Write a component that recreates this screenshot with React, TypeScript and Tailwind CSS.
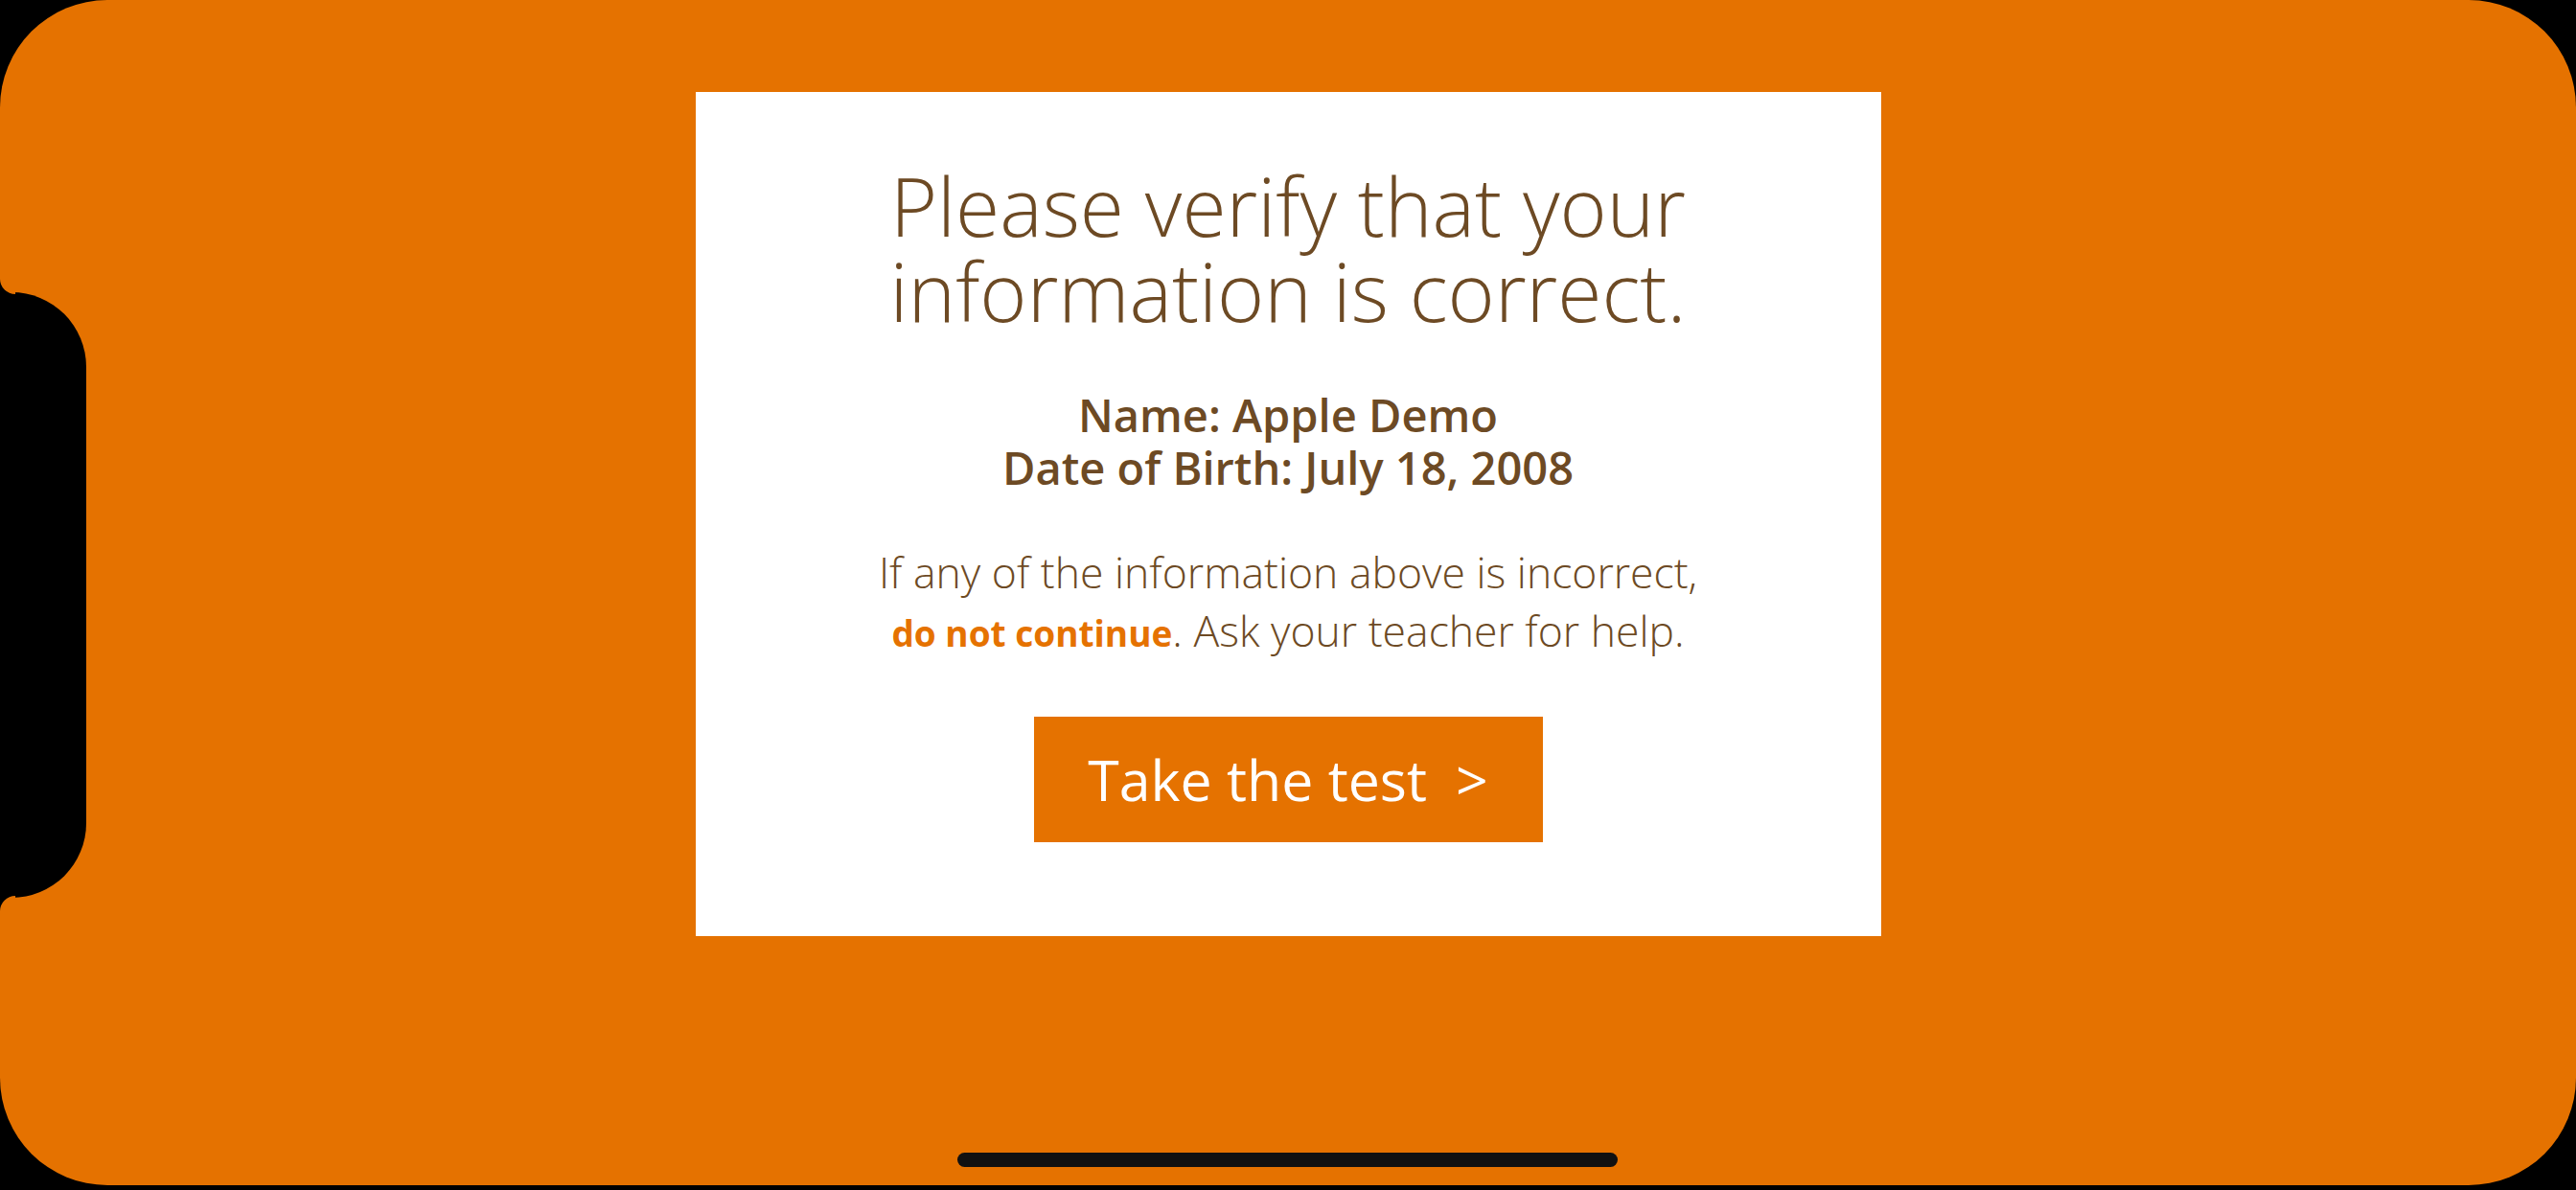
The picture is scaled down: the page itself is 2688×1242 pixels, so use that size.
import React from "react";

const App: React.FC = () => {
  return (
    <div className="w-[2688px] h-[1242px] bg-black overflow-hidden font-['Open_Sans',sans-serif]">
      <div className="relative w-full h-[1237px] bg-[#e57200] rounded-[112px] flex justify-center">
        {/* Notch cut-out with small fillets */}
        <div className="absolute left-0 top-[305px] w-[90px] h-[632px] bg-black rounded-r-[78px]" />
        <div className="absolute left-0 top-[291px] w-[16px] h-[16px] bg-black">
          <div className="w-full h-full bg-[#e57200] rounded-bl-[16px]" />
        </div>
        <div className="absolute left-0 top-[935px] w-[16px] h-[16px] bg-black">
          <div className="w-full h-full bg-[#e57200] rounded-tl-[16px]" />
        </div>

        {/* Card */}
        <div className="mt-[96px] w-[1237px] h-[881px] bg-white flex flex-col items-center pt-[74px] text-[#6d4a24]">
          <h1 className="text-[84px] leading-[89px] font-light text-center">
            Please verify that your
            <br />
            information is correct.
          </h1>

          <div className="mt-[58px] text-[47px] leading-[55px] font-semibold text-center">
            <p>Name: Apple Demo</p>
            <p>Date of Birth: July 18, 2008</p>
          </div>

          <p className="mt-[50px] text-[44.5px] leading-[61px] font-light text-center">
            If any of the information above is incorrect,
            <br />
            <span className="text-[37px] font-bold text-[#e57200]">do not continue</span>. Ask your teacher for help.
          </p>

          <button className="mt-[57px] w-[531px] h-[131px] bg-[#e57200] text-white text-[59px] font-normal flex items-center justify-center">
            Take the test<span className="ml-[30px]">&gt;</span>
          </button>
        </div>

        {/* Home indicator */}
        <div className="absolute left-[999px] top-[1203px] w-[689px] h-[15px] rounded-full bg-[#111111]" />
      </div>
    </div>
  );
};

export default App;
